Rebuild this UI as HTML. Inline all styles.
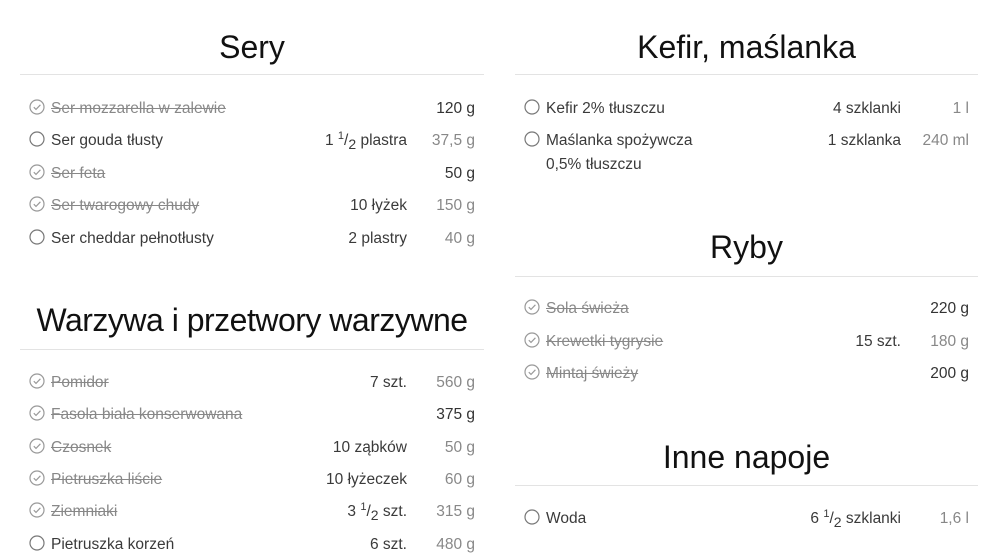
<!DOCTYPE html>
<html><head><meta charset="utf-8"><style>
body{margin:0;width:1000px;height:559px;background:#fff;position:relative;overflow:hidden;font-family:"Liberation Sans",sans-serif;}
.t{position:absolute;text-align:center;font-size:32px;color:#111;line-height:40px;height:40px;}
.hr{position:absolute;height:1px;background:#e3e3e3;}
.r{position:absolute;height:20px;line-height:20px;font-size:15.5px;color:#3a3a3a;}
.r svg{position:absolute;left:9px;top:2px;}
.n,.q,.g{top:2px}
.n{position:absolute;left:31px;white-space:nowrap;}
.d .n{color:#888;text-decoration:line-through;}
.q{position:absolute;right:77px;white-space:nowrap;}
.g{position:absolute;right:9px;color:#888;white-space:nowrap;}
.d .g{color:#333}
sup{font-size:11px;line-height:0;vertical-align:6px}
sub{font-size:14px;line-height:0;vertical-align:-4px}
</style></head><body>
<svg width="0" height="0" style="position:absolute"><defs>
<symbol id="c" viewBox="0 0 16 16"><circle cx="8" cy="8" r="7" fill="none" stroke="#777" stroke-width="1.2"/></symbol>
<symbol id="k" viewBox="0 0 16 16"><circle cx="8" cy="8" r="7" fill="none" stroke="#999" stroke-width="1.2"/><path d="M4.8 8.2l2.2 2.2 4.4-4.6" fill="none" stroke="#999" stroke-width="1.2"/></symbol>
</defs></svg>

<div class="t" style="left:20px;width:464px;top:27px">Sery</div>
<div class="hr" style="left:20px;width:464px;top:74px"></div>
<div class="r d" style="left:20px;width:464px;top:97px"><svg width="16" height="16"><use href="#k"/></svg><span class="n">Ser mozzarella w zalewie</span><span class="g">120 g</span></div>
<div class="r" style="left:20px;width:464px;top:129px"><svg width="16" height="16"><use href="#c"/></svg><span class="n">Ser gouda tłusty</span><span class="q">1 <sup>1</sup>/<sub>2</sub> plastra</span><span class="g">37,5 g</span></div>
<div class="r d" style="left:20px;width:464px;top:162px"><svg width="16" height="16"><use href="#k"/></svg><span class="n">Ser feta</span><span class="g">50 g</span></div>
<div class="r d" style="left:20px;width:464px;top:194px"><svg width="16" height="16"><use href="#k"/></svg><span class="n">Ser twarogowy chudy</span><span class="q">10 łyżek</span><span class="g" style="color:#888">150 g</span></div>
<div class="r" style="left:20px;width:464px;top:227px"><svg width="16" height="16"><use href="#c"/></svg><span class="n">Ser cheddar pełnotłusty</span><span class="q">2 plastry</span><span class="g">40 g</span></div>

<div class="t" style="left:20px;width:464px;top:300px;letter-spacing:-0.5px">Warzywa i przetwory warzywne</div>
<div class="hr" style="left:20px;width:464px;top:349px"></div>
<div class="r d" style="left:20px;width:464px;top:371px"><svg width="16" height="16"><use href="#k"/></svg><span class="n">Pomidor</span><span class="q">7 szt.</span><span class="g" style="color:#888">560 g</span></div>
<div class="r d" style="left:20px;width:464px;top:403px"><svg width="16" height="16"><use href="#k"/></svg><span class="n">Fasola biała konserwowana</span><span class="g">375 g</span></div>
<div class="r d" style="left:20px;width:464px;top:436px"><svg width="16" height="16"><use href="#k"/></svg><span class="n">Czosnek</span><span class="q">10 ząbków</span><span class="g" style="color:#888">50 g</span></div>
<div class="r d" style="left:20px;width:464px;top:468px"><svg width="16" height="16"><use href="#k"/></svg><span class="n">Pietruszka liście</span><span class="q">10 łyżeczek</span><span class="g" style="color:#888">60 g</span></div>
<div class="r d" style="left:20px;width:464px;top:500px"><svg width="16" height="16"><use href="#k"/></svg><span class="n">Ziemniaki</span><span class="q">3 <sup>1</sup>/<sub>2</sub> szt.</span><span class="g" style="color:#888">315 g</span></div>
<div class="r" style="left:20px;width:464px;top:533px"><svg width="16" height="16"><use href="#c"/></svg><span class="n">Pietruszka korzeń</span><span class="q">6 szt.</span><span class="g">480 g</span></div>

<div class="t" style="left:515px;width:463px;top:27px">Kefir, maślanka</div>
<div class="hr" style="left:515px;width:463px;top:74px"></div>
<div class="r" style="left:515px;width:463px;top:97px"><svg width="16" height="16"><use href="#c"/></svg><span class="n">Kefir 2% tłuszczu</span><span class="q">4 szklanki</span><span class="g">1 l</span></div>
<div class="r" style="left:515px;width:463px;top:129px"><svg width="16" height="16"><use href="#c"/></svg><span class="n">Maślanka spożywcza</span><span class="q">1 szklanka</span><span class="g">240 ml</span></div>
<div class="r" style="left:515px;width:463px;top:153px"><span class="n">0,5% tłuszczu</span></div>

<div class="t" style="left:515px;width:463px;top:227px">Ryby</div>
<div class="hr" style="left:515px;width:463px;top:276px"></div>
<div class="r d" style="left:515px;width:463px;top:297px"><svg width="16" height="16"><use href="#k"/></svg><span class="n">Sola świeża</span><span class="g">220 g</span></div>
<div class="r d" style="left:515px;width:463px;top:330px"><svg width="16" height="16"><use href="#k"/></svg><span class="n">Krewetki tygrysie</span><span class="q">15 szt.</span><span class="g" style="color:#888">180 g</span></div>
<div class="r d" style="left:515px;width:463px;top:362px"><svg width="16" height="16"><use href="#k"/></svg><span class="n">Mintaj świeży</span><span class="g">200 g</span></div>

<div class="t" style="left:515px;width:463px;top:437px">Inne napoje</div>
<div class="hr" style="left:515px;width:463px;top:485px"></div>
<div class="r" style="left:515px;width:463px;top:507px"><svg width="16" height="16"><use href="#c"/></svg><span class="n">Woda</span><span class="q">6 <sup>1</sup>/<sub>2</sub> szklanki</span><span class="g">1,6 l</span></div>
</body></html>
